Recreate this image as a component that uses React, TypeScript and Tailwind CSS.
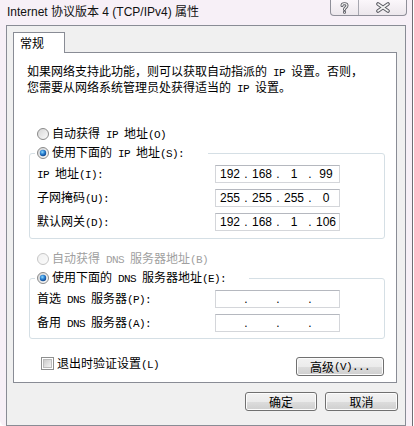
import { useId } from "react";

// SimSun-like run: CJK at 12px, ASCII half-width (6px) in a mono face
function T({ s }: { s: string }) {
  const parts = s.split(/([\x20-\x7e]+)/).filter((p) => p !== "");
  return (
    <>
      {parts.map((p, i) =>
        /^[\x20-\x7e]+$/.test(p) ? (
          <span key={i} className="font-['Liberation_Mono',monospace] text-[11px] tracking-[-0.6px] whitespace-pre">
            {p}
          </span>
        ) : (
          <span key={i}>{p}</span>
        )
      )}
    </>
  );
}

function Radio({ checked = false, disabled = false }: { checked?: boolean; disabled?: boolean }) {
  const id = useId();
  return (
    <svg width="12" height="12" viewBox="0 0 12 12" className="shrink-0">
      <defs>
        <linearGradient id={`${id}g`} x1="0" y1="0" x2="1" y2="1">
          <stop offset="0" stopColor={disabled ? "#f0f0f0" : "#d4d4d4"} />
          <stop offset="1" stopColor={disabled ? "#fbfbfb" : "#fdfdfd"} />
        </linearGradient>
        <radialGradient id={`${id}b`} cx="0.4" cy="0.35" r="0.7">
          <stop offset="0" stopColor="#8fdcff" />
          <stop offset="0.5" stopColor="#2a7fd0" />
          <stop offset="1" stopColor="#0b3f86" />
        </radialGradient>
      </defs>
      <circle cx="6" cy="6" r="5.5" fill={`url(#${id}g)`} stroke={disabled ? "#c6c6c6" : "#8a8a8a"} />
      {checked && <circle cx="6" cy="6" r="3.2" fill={`url(#${id}b)`} />}
    </svg>
  );
}

function Checkbox() {
  const id = useId();
  return (
    <svg width="13" height="13" viewBox="0 0 13 13" className="shrink-0">
      <defs>
        <linearGradient id={`${id}c`} x1="0" y1="0" x2="1" y2="1">
          <stop offset="0" stopColor="#c8c8c8" />
          <stop offset="1" stopColor="#f6f6f6" />
        </linearGradient>
      </defs>
      <rect x="0.5" y="0.5" width="12" height="12" fill="#fff" stroke="#8e8f8f" />
      <rect x="2.5" y="2.5" width="8" height="8" fill={`url(#${id}c)`} stroke="#bcbcbc" />
    </svg>
  );
}

function Btn({ w, children }: { w: string; children: React.ReactNode }) {
  return (
    <div
      className={`${w} h-[19px] rounded-[3px] border border-[#707070] bg-[linear-gradient(#f2f2f2_0%,#ebebeb_50%,#dddddd_50%,#cfcfcf_100%)] shadow-[inset_0_0_0_1px_#fcfcfc] flex items-center justify-center leading-[16px]`}
    >
      {children}
    </div>
  );
}

function IpBox({ parts }: { parts?: string[] }) {
  const p = parts ?? ["", "", "", ""];
  return (
    <div className="w-[125px] h-[18px] border border-[#d4d6da] border-t-[#b5b8bf] bg-white flex items-center font-['Liberation_Sans',sans-serif] text-[12px] leading-[16px]">
      {p.map((v, i) => (
        <div key={i} className="flex items-center">
          {i > 0 && <span className="w-[4px] text-center">.</span>}
          <span className="w-[28px] text-center">{v}</span>
        </div>
      ))}
    </div>
  );
}

function Row({ label, parts }: { label: string; parts?: string[] }) {
  return (
    <div className="flex items-center h-[18px]">
      <div className="w-[178px] leading-[16px]">
        <T s={label} />
      </div>
      <IpBox parts={parts} />
    </div>
  );
}

export default function App() {
  return (
    <div className="w-[414px] h-[426px] bg-white text-black font-['Noto_Sans_CJK_SC',sans-serif] text-[12px] leading-[16px]">
      <div className="relative w-[413px] h-[426px] bg-[#f7f0f7] border-r border-[#6f6f74] rounded-bl-[6px]">
        {/* title bar */}
        <div className="h-[25px] pl-[7px] pt-[4px] font-['Liberation_Sans','Noto_Sans_CJK_SC',sans-serif] text-[12px] leading-[16px] text-[#111]">
          Internet 协议版本 4 (TCP/IPv4) 属性
        </div>
        <div className="absolute left-[330px] top-0 w-[77px] h-[16px] flex rounded-b-[4px] border border-t-0 border-[#8f8f99] bg-[linear-gradient(#fbf7fb,#ece7ec)]">
          <div className="w-[28px] border-r border-[#a7a7b0] flex items-center justify-center">
            <svg width="9" height="12" viewBox="0 0 9 12">
              <path d="M2 3.5C2 1 7 1 7 3.5C7 5.5 4.5 5.5 4.5 7.5M4.5 10L4.5 10.3" fill="none" stroke="#5a5a62" strokeWidth="3" strokeLinecap="round" />
              <path d="M2 3.5C2 1 7 1 7 3.5C7 5.5 4.5 5.5 4.5 7.5M4.5 10L4.5 10.3" fill="none" stroke="#f4f4f4" strokeWidth="1.2" strokeLinecap="round" />
            </svg>
          </div>
          <div className="flex-1 flex items-center justify-center">
            <svg width="14" height="11" viewBox="0 0 14 11">
              <path d="M2 2L12 9M12 2L2 9" fill="none" stroke="#5a5a62" strokeWidth="3.6" strokeLinecap="round" />
              <path d="M2 2L12 9M12 2L2 9" fill="none" stroke="#f4f4f4" strokeWidth="1.6" strokeLinecap="round" />
            </svg>
          </div>
        </div>

        {/* dialog body */}
        <div className="ml-[6px] w-[400px] h-[401px] border border-[#898c95] bg-[#f0f0f0] px-[6px] pt-[6px]">
          <div className="relative z-10 -mb-px w-[52px] h-[21px] bg-white border border-b-0 border-[#898c95] pl-[6px] pt-[2px]">
            常规
          </div>
          <div className="w-[384px] h-[331px] bg-white border border-[#898c95] pl-[15px] pr-[11px]">
            <div className="-ml-[2px] mt-[11px] leading-[13px] whitespace-nowrap">
              <div>
                <T s="如果网络支持此功能，则可以获取自动指派的 IP 设置。否则，" />
              </div>
              <div>
                <T s="您需要从网络系统管理员处获得适当的 IP 设置。" />
              </div>
            </div>

            <div className="mt-[30px] h-[16px] pl-[8px] flex items-center gap-[3px]">
              <Radio />
              <span>
                <T s="自动获得 IP 地址(O)" />
              </span>
            </div>

            <fieldset className="mt-[3px] border border-[#d5dfe5] rounded-[3px] pl-[7px] pt-[4px] pb-[7px]">
              <legend className="-ml-[2px] pl-[2px] pr-[24px] h-[16px] flex items-center gap-[3px]">
                <Radio checked />
                <span>
                  <T s="使用下面的 IP 地址(S):" />
                </span>
              </legend>
              <div className="flex flex-col gap-[6px]">
                <Row label="IP 地址(I):" parts={["192", "168", "1", "99"]} />
                <Row label="子网掩码(U):" parts={["255", "255", "255", "0"]} />
                <Row label="默认网关(D):" parts={["192", "168", "1", "106"]} />
              </div>
            </fieldset>

            <div className="mt-[12px] h-[16px] pl-[8px] flex items-center gap-[3px] text-[#a0a0a0]">
              <Radio disabled />
              <span>
                <T s="自动获得 DNS 服务器地址(B)" />
              </span>
            </div>

            <fieldset className="mt-[3px] border border-[#d5dfe5] rounded-[3px] pl-[7px] pt-[4px] pb-[6px]">
              <legend className="-ml-[2px] pl-[2px] pr-[23px] h-[16px] flex items-center gap-[3px]">
                <Radio checked />
                <span>
                  <T s="使用下面的 DNS 服务器地址(E):" />
                </span>
              </legend>
              <div className="flex flex-col gap-[6px]">
                <Row label="首选 DNS 服务器(P):" />
                <Row label="备用 DNS 服务器(A):" />
              </div>
            </fieldset>

            <div className="mt-[18px] flex items-start justify-between">
              <div className="pl-[12px] h-[13px] flex items-center gap-[3px]">
                <Checkbox />
                <span>
                  <T s="退出时验证设置(L)" />
                </span>
              </div>
              <div className="mr-[1px]">
                <Btn w="w-[88px]">
                  <T s="高级(V)..." />
                </Btn>
              </div>
            </div>
          </div>

          <div className="mt-[9px] flex justify-end gap-[8px] pr-[1px]">
            <Btn w="w-[72px]">确定</Btn>
            <Btn w="w-[73px]">取消</Btn>
          </div>
        </div>
      </div>
    </div>
  );
}
